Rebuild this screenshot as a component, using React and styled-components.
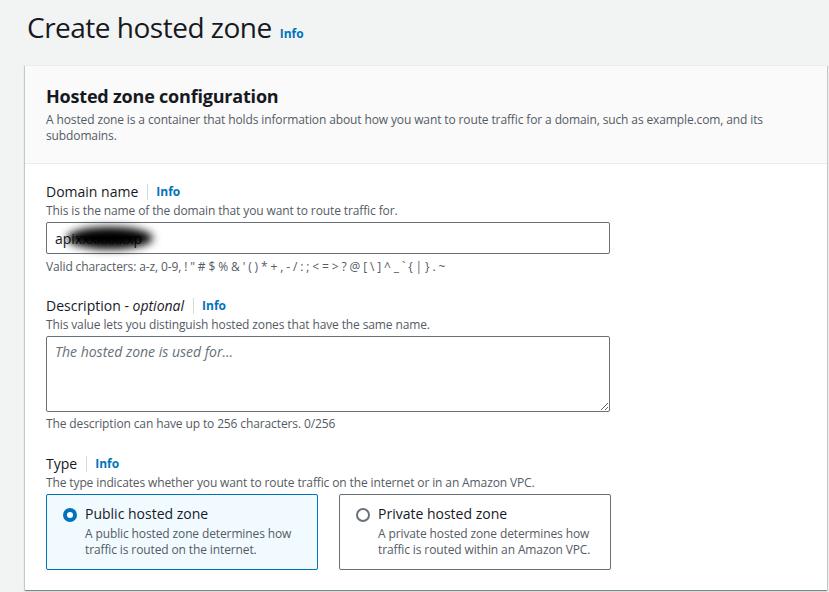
import React from "react";
import styled, { createGlobalStyle } from "styled-components";

const Global = createGlobalStyle`
  html, body { margin: 0; padding: 0; background: #f2f3f3; }
  body { font-family: "Open Sans", "Noto Sans", Arial, sans-serif; color: #16191f; }
  * { box-sizing: border-box; }
`;

const Page = styled.div`
  width: 829px;
  height: 592px;
  overflow: hidden;
  padding: 0 0 0 25px;
`;

const TitleRow = styled.div`
  display: flex;
  align-items: baseline;
  gap: 8px;
  padding: 9px 0 0 2px;
  height: 65px;
`;

const PageTitle = styled.h1`
  margin: 0;
  font-size: 28px;
  font-weight: 400;
  line-height: 36px;
  letter-spacing: -0.5px;
  color: #16191f;
`;

const InfoLink = styled.a`
  font-size: 12px;
  font-weight: 700;
  color: #0073bb;
  text-decoration: none;
`;

const Card = styled.section`
  background: #fff;
  box-shadow: 0 1px 1px 0 rgba(0, 28, 36, 0.3), 1px 1px 1px 0 rgba(0, 28, 36, 0.15), -1px 1px 1px 0 rgba(0, 28, 36, 0.15);
  width: 802px;
  border-top: 1px solid #eaeded;
`;

const CardHeader = styled.header`
  background: #fafafa;
  border-bottom: 1px solid #eaeded;
  padding: 18px 20px 18px 21px;
  height: 98px;
`;

const CardTitle = styled.h2`
  margin: 0 0 4px;
  font-size: 18px;
  font-weight: 700;
  line-height: 24px;
  letter-spacing: -0.2px;
`;

const Desc = styled.p`
  margin: 0;
  font-size: 12px;
  line-height: 16px;
  color: #545b64;
  letter-spacing: -0.12px;
`;

const CardBody = styled.div`
  padding: 17px 20px 20px 21px;
  display: flex;
  flex-direction: column;
  gap: 19px;
`;

const Field = styled.div`
  display: flex;
  flex-direction: column;
  margin-top: ${(p) => p.$mt || 0}px;
`;

const LabelRow = styled.div`
  display: flex;
  align-items: center;
  font-size: 14px;
  line-height: 22px;
  color: #16191f;
`;

const Sep = styled.span`
  display: inline-block;
  width: 1px;
  height: 16px;
  background: #d5dbdb;
  margin: 0 8px 0 9px;
`;

const InputWrap = styled.div`
  position: relative;
  width: 564px;
  margin-top: 3px;
`;

const TextInput = styled.input`
  display: block;
  width: 100%;
  height: 32px;
  border: 1px solid #687078;
  border-radius: 2px;
  padding: 4px 8px;
  font-family: inherit;
  font-size: 14px;
  color: #16191f;
  background: #fff;
  outline: none;
`;

const Blur = styled.span`
  position: absolute;
  left: 21px;
  top: 5px;
  width: 86px;
  height: 22px;
  border-radius: 50%;
  background: #000;
  filter: blur(4px);
  pointer-events: none;
`;

const TextArea = styled.textarea`
  width: 564px;
  height: 76px;
  margin-top: 3px;
  border: 1px solid #687078;
  border-radius: 2px;
  padding: 4px 8px;
  font-family: inherit;
  font-size: 14px;
  line-height: 22px;
  resize: vertical;
  outline: none;
  display: block;
  &::placeholder { color: #687078; font-style: italic; }
`;

const Constraint = styled(Desc)`
  margin-top: ${(p) => p.$mt}px;
`;

const Tiles = styled.div`
  display: flex;
  gap: 21px;
  margin-top: 3px;
`;

const Tile = styled.label`
  width: 272px;
  height: 76px;
  border: 1px solid ${(p) => (p.$selected ? "#0073bb" : "#687078")};
  background: ${(p) => (p.$selected ? "#f1faff" : "#fff")};
  border-radius: 2px;
  padding: 8px 12px 10px 16px;
  display: flex;
  gap: 8px;
`;

const Radio = styled.span`
  flex: none;
  width: 14px;
  height: 14px;
  margin-top: 5px;
  border-radius: 50%;
  border: ${(p) => (p.$checked ? "4px solid #0073bb" : "2px solid #687078")};
  background: #fff;
`;

const TileText = styled.div`
  display: flex;
  flex-direction: column;
`;

const TileTitle = styled.span`
  font-size: 14px;
  line-height: 22px;
  margin-bottom: 1px;
`;

export default function App() {
  return (
    <Page>
      <Global />
      <TitleRow>
        <PageTitle>Create hosted zone</PageTitle>
        <InfoLink href="#">Info</InfoLink>
      </TitleRow>
      <Card>
        <CardHeader>
          <CardTitle>Hosted zone configuration</CardTitle>
          <Desc>
            A hosted zone is a container that holds information about how you want to route traffic for a domain, such as example.com, and its subdomains.
          </Desc>
        </CardHeader>
        <CardBody>
          <Field>
            <LabelRow>
              Domain name<Sep /><InfoLink href="#">Info</InfoLink>
            </LabelRow>
            <Desc>This is the name of the domain that you want to route traffic for.</Desc>
            <InputWrap>
              <TextInput defaultValue="apixxxxxxxxp" />
              <Blur />
            </InputWrap>
            <Constraint $mt={5}>Valid characters: a-z, 0-9, ! " # $ % &amp; ' ( ) * + , - / : ; &lt; = &gt; ? @ [ \ ] ^ _ ` {"{"} | {"}"} . ~</Constraint>
          </Field>
          <Field $mt={1}>
            <LabelRow>
              Description -&nbsp;<i>optional</i><Sep /><InfoLink href="#">Info</InfoLink>
            </LabelRow>
            <Desc>This value lets you distinguish hosted zones that have the same name.</Desc>
            <TextArea placeholder="The hosted zone is used for..." />
            <Constraint $mt={4}>The description can have up to 256 characters. 0/256</Constraint>
          </Field>
          <Field $mt={2}>
            <LabelRow>
              Type<Sep /><InfoLink href="#">Info</InfoLink>
            </LabelRow>
            <Desc>The type indicates whether you want to route traffic on the internet or in an Amazon VPC.</Desc>
            <Tiles>
              <Tile $selected>
                <Radio $checked />
                <TileText>
                  <TileTitle>Public hosted zone</TileTitle>
                  <Desc>A public hosted zone determines how traffic is routed on the internet.</Desc>
                </TileText>
              </Tile>
              <Tile>
                <Radio />
                <TileText>
                  <TileTitle>Private hosted zone</TileTitle>
                  <Desc>A private hosted zone determines how traffic is routed within an Amazon VPC.</Desc>
                </TileText>
              </Tile>
            </Tiles>
          </Field>
        </CardBody>
      </Card>
    </Page>
  );
}
